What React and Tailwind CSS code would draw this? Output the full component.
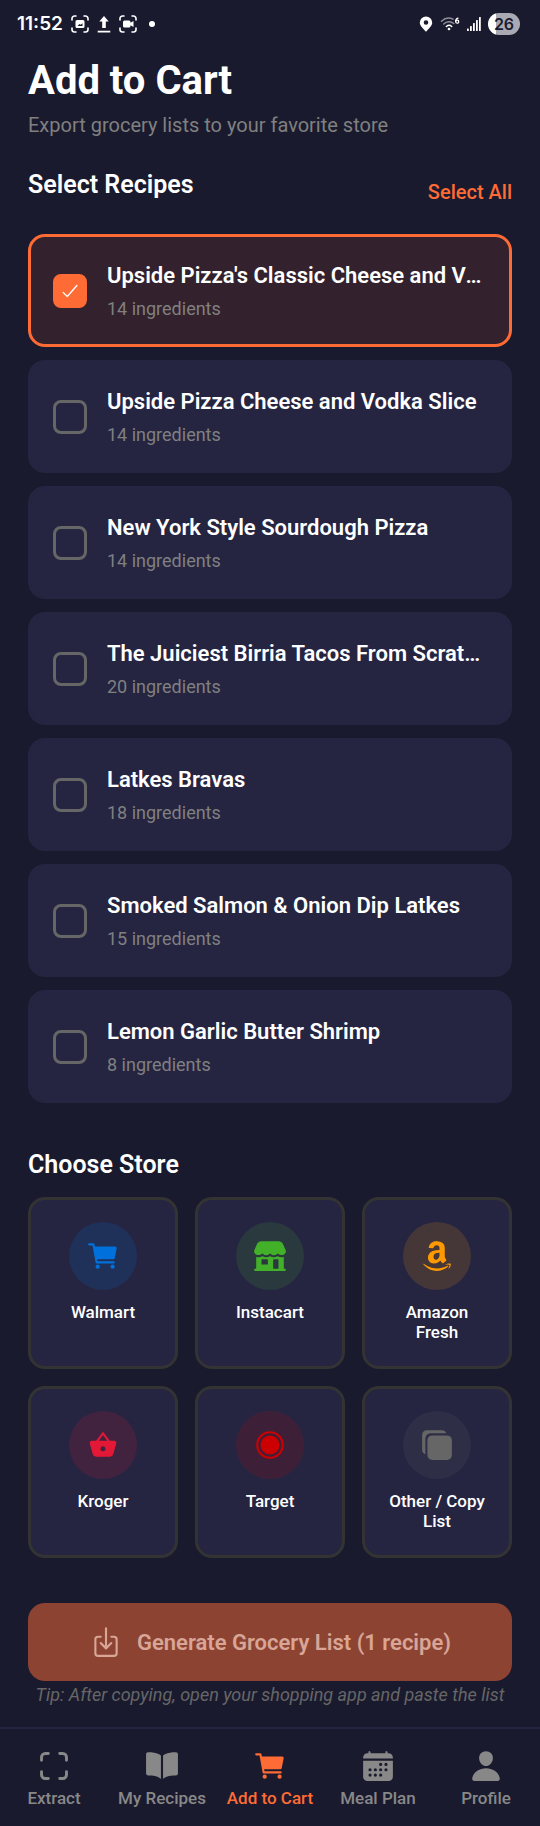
import { useState } from 'react';
import {
  IoCart, IoStorefront, IoLogoAmazon, IoBasket, IoRadioButtonOn, IoCopy,
  IoCheckmark, IoDownloadOutline, IoScan, IoBook, IoCalendar, IoPerson,
} from 'react-icons/io5';

const RECIPES = [
  { id: 1, title: "Upside Pizza's Classic Cheese and Vodka Slice", count: 14 },
  { id: 2, title: 'Upside Pizza Cheese and Vodka Slice', count: 14 },
  { id: 3, title: 'New York Style Sourdough Pizza', count: 14 },
  { id: 4, title: 'The Juiciest Birria Tacos From Scratch', count: 20 },
  { id: 5, title: 'Latkes Bravas', count: 18 },
  { id: 6, title: 'Smoked Salmon & Onion Dip Latkes', count: 15 },
  { id: 7, title: 'Lemon Garlic Butter Shrimp', count: 8 },
];

const STORES = [
  { name: 'Walmart',      icon: IoCart,          color: 'bg-[#0071dc]/15 text-[#0071dc]' },
  { name: 'Instacart',    icon: IoStorefront,    color: 'bg-[#43b02a]/15 text-[#43b02a]' },
  { name: 'Amazon Fresh', icon: IoLogoAmazon,    color: 'bg-[#ff9900]/15 text-[#ff9900]' },
  { name: 'Kroger',       icon: IoBasket,        color: 'bg-[#e31837]/15 text-[#e31837]' },
  { name: 'Target',       icon: IoRadioButtonOn, color: 'bg-[#cc0000]/15 text-[#cc0000]' },
  { name: 'Other / Copy List', icon: IoCopy,     color: 'bg-[#666666]/15 text-[#666666]' },
];

const TABS = [
  { label: 'Extract',     icon: IoScan },
  { label: 'My Recipes',  icon: IoBook },
  { label: 'Add to Cart', icon: IoCart, active: true },
  { label: 'Meal Plan',   icon: IoCalendar },
  { label: 'Profile',     icon: IoPerson },
];

function StatusBar() {
  return (
    <div className="flex h-12 items-center justify-between pl-[17px] pr-5 text-white">
      <div className="flex items-center gap-2">
        <span className="font-[Inter,sans-serif] text-[19px] font-semibold leading-6">11:52</span>
        <svg width="18" height="18" viewBox="0 0 18 18" fill="none" stroke="currentColor" strokeWidth="1.6" strokeLinecap="round">
          <path d="M1 5V3.5A2.5 2.5 0 0 1 3.5 1H5M13 1h1.5A2.5 2.5 0 0 1 17 3.5V5M17 13v1.5a2.5 2.5 0 0 1-2.5 2.5H13M5 17H3.5A2.5 2.5 0 0 1 1 14.5V13" />
          <path d="M6 5h6a1.5 1.5 0 0 1 1.5 1.5v5a1.5 1.5 0 0 1-1.5 1.5H6a1.5 1.5 0 0 1-1.5-1.5v-5A1.5 1.5 0 0 1 6 5ZM6.5 11h5V8.2L9.8 9.8 8.5 9Z" fill="currentColor" fillRule="evenodd" stroke="none" />
        </svg>
        <svg width="14" height="18" viewBox="0 0 14 18" fill="currentColor">
          <path d="M7 1l4.7 5.5H8.8V13H5.200V6.500H2.300ZM.7 15.800h12.600v1.600H.7Z" />
        </svg>
        <svg width="18" height="18" viewBox="0 0 18 18" fill="none" stroke="currentColor" strokeWidth="1.6" strokeLinecap="round">
          <path d="M1 5V3.5A2.5 2.5 0 0 1 3.5 1H5M13 1h1.5A2.5 2.5 0 0 1 17 3.5V5M17 13v1.5a2.5 2.5 0 0 1-2.5 2.5H13M5 17H3.5A2.5 2.5 0 0 1 1 14.5V13" />
          <path d="M5.5 5.5H10a1.5 1.5 0 0 1 1.5 1.5v.8L14.5 6v6l-3-1.8V11a1.5 1.5 0 0 1-1.5 1.5H5.5A1.5 1.5 0 0 1 4 11V7a1.5 1.5 0 0 1 1.5-1.5Z" fill="currentColor" stroke="none" />
        </svg>
        <span className="ml-1 size-1.5 rounded-full bg-white" />
      </div>
      <div className="flex items-center gap-[7px]">
        <svg width="14" height="16" viewBox="0 0 14 16" fill="currentColor">
          <path fillRule="evenodd" d="M7 .5A6.2 6.2 0 0 1 13.2 6.7C13.2 10 9.5 12.5 7 15.8 4.5 12.5.8 10 .8 6.7A6.2 6.2 0 0 1 7 .5ZM7 4.2a2.3 2.3 0 1 0 0 4.6 2.3 2.3 0 0 0 0-4.6Z" />
        </svg>
        <svg width="20" height="16" viewBox="0 0 20 16" fill="none" stroke="currentColor" strokeWidth="1.5" strokeLinecap="round">
          <path d="M1.5 5.2C5 1.9 9.5 1.5 13 3.2M3.8 8c2.8-2.7 7-2.9 9.9-.5" opacity=".5" />
          <path d="M6.4 10.5c1.7-1.4 3.8-1.4 5.3 0" />
          <circle cx="9" cy="13" r=".6" fill="currentColor" />
          <path d="M18 2.2C16.3 2.8 15.6 4 15.6 5.4" strokeWidth="1.3" />
          <circle cx="17.2" cy="5.7" r="1.5" strokeWidth="1.3" />
        </svg>
        <svg width="14" height="16" viewBox="0 0 14 16" fill="currentColor">
          <rect x="0" y="12.5" width="1.8" height="2.5" rx=".5" />
          <rect x="3" y="10" width="1.8" height="5" rx=".5" />
          <rect x="6" y="7" width="1.8" height="8" rx=".5" />
          <rect x="9" y="4" width="1.8" height="11" rx=".5" />
          <rect x="12" y="1" width="1.8" height="14" rx=".5" />
        </svg>
        <span className="flex h-[22px] w-8 items-center justify-center rounded-full bg-linear-to-r from-white from-25% to-[#a9a9b3] to-25% font-[Inter,sans-serif] text-base font-semibold leading-none text-[#1a1a2e]">
          26
        </span>
      </div>
    </div>
  );
}

function RecipeCard({ recipe, selected, onToggle }) {
  return (
    <label
      className={`flex cursor-pointer items-center gap-5 rounded-[17px] border-3 py-[23px] pl-[22px] pr-6 ${
        selected ? 'border-[#ff6b35] bg-[#33222d]' : 'border-[#252542] bg-[#252542]'
      }`}
    >
      <span className="grid shrink-0 place-items-center">
        <input
          type="checkbox"
          checked={selected}
          onChange={onToggle}
          className="col-start-1 row-start-1 size-[34px] appearance-none rounded-lg border-3 border-[#666666] checked:border-[#ff6b35] checked:bg-[#ff6b35]"
        />
        {selected && <IoCheckmark size={22} className="pointer-events-none col-start-1 row-start-1 text-white" />}
      </span>
      <span className="min-w-0 flex-1">
        <span className="block truncate text-[22px] font-semibold leading-8 text-white">{recipe.title}</span>
        <span className="mt-[5px] block text-lg leading-6 text-[#808080]">{recipe.count} ingredients</span>
      </span>
    </label>
  );
}

function StoreCard({ store }) {
  const Icon = store.icon;
  return (
    <button
      type="button"
      className="flex min-h-[172px] flex-col items-center rounded-[17px] border-3 border-[#333333] bg-[#252542] px-5 pb-6 pt-[22px]"
    >
      <span className={`flex size-[68px] items-center justify-center rounded-full ${store.color}`}>
        <Icon size={34} />
      </span>
      <span className="mt-3 text-center text-[17px] font-medium leading-5 text-white">{store.name}</span>
    </button>
  );
}

export default function App() {
  const [selected, setSelected] = useState([1]);

  const toggle = (id) =>
    setSelected((s) => (s.includes(id) ? s.filter((x) => x !== id) : [...s, id]));

  const count = selected.length;

  return (
    <div className="flex min-h-screen flex-col bg-[#1a1a2e] font-[Roboto,sans-serif]">
      <StatusBar />

      <main className="flex-1 px-7">
        <h1 className="pt-[9px] text-[40px] font-bold leading-12 text-white">Add to Cart</h1>
        <p className="mt-2 text-xl leading-6 text-[#808080]">Export grocery lists to your favorite store</p>

        {/* Recipes */}
        <section>
          <div className="mt-8 flex items-center justify-between">
            <h2 className="pb-3.5 text-[25px] font-semibold leading-8 text-white">Select Recipes</h2>
            <button type="button" className="text-xl font-medium leading-6 text-[#ff6b35]" onClick={() => setSelected(RECIPES.map((r) => r.id))}>
              Select All
            </button>
          </div>
          <div className="mt-[19px] flex flex-col gap-[13px]">
            {RECIPES.map((r) => (
              <RecipeCard key={r.id} recipe={r} selected={selected.includes(r.id)} onToggle={() => toggle(r.id)} />
            ))}
          </div>
        </section>

        {/* Stores */}
        <section className="mt-[46px]">
          <h2 className="text-[25px] font-semibold leading-8 text-white">Choose Store</h2>
          <div className="mt-4 grid grid-cols-3 gap-[17px]">
            {STORES.map((s) => <StoreCard key={s.name} store={s} />)}
          </div>
        </section>

        <button
          type="button"
          className="mt-[45px] flex h-[78px] w-full items-center justify-center gap-3.5 rounded-[17px] bg-[#8c4332] text-[22px] font-semibold text-[#d8a596]"
        >
          <IoDownloadOutline size={34} />
          Generate Grocery List ({count} {count === 1 ? 'recipe' : 'recipes'})
        </button>
        <p className="mt-0.5 whitespace-nowrap text-center text-lg italic leading-6 text-[#666666]">
          Tip: After copying, open your shopping app and paste the list
        </p>
      </main>

      <nav className="mt-4 grid h-[99px] grid-cols-5 border-t-2 border-[#252542]">
        {TABS.map(({ label, icon: Icon, active }) => (
          <a
            key={label}
            href="#"
            className={`flex flex-col items-center pt-5 ${active ? 'text-[#ff6b35]' : 'text-[#888888]'}`}
          >
            <Icon size={34} />
            <span className="mt-[3px] whitespace-nowrap text-[17px] font-medium leading-6">{label}</span>
          </a>
        ))}
      </nav>
    </div>
  );
}
